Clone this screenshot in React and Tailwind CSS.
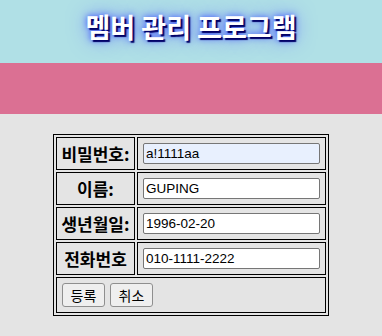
const rows = [
  { label: "비밀번호:", value: "a!1111aa", filled: true },
  { label: "이름:", value: "GUPING" },
  { label: "생년월일:", value: "1996-02-20" },
  { label: "전화번호", value: "010-1111-2222" },
];

export default function App() {
  return (
    <div className="min-h-[336px] bg-[#e4e4e4] font-['Liberation_Sans','Noto_Sans_CJK_KR',sans-serif]">
      {/* title */}
      <header className="h-[63px] bg-[#b0e0e6] flex justify-center pt-[9px]">
        <h1 className="text-[27px] leading-[36px] font-bold text-white font-['Noto_Sans_CJK_KR',sans-serif] [text-shadow:2px_2px_1px_#000066,0_0_6px_#3344ff,0_0_20px_#6677ff]">
          멤버 관리 프로그램
        </h1>
      </header>

      <div className="h-[51px] bg-[#db7093]" />

      <div className="pt-[20px] pb-[20px]">
        <table className="mx-auto border border-black border-separate border-spacing-[2px]">
          <tbody>
            {rows.map((row) => (
              <tr key={row.label}>
                <th className="w-[79px] h-[33px] p-0 border border-black text-center text-[17px] leading-[20px] font-bold text-black font-['Noto_Sans_CJK_KR',sans-serif] whitespace-nowrap">
                  {row.label}
                </th>
                <td className="w-[189px] h-[33px] p-[5px] border border-black">
                  <input
                    type="text"
                    defaultValue={row.value}
                    className={`block w-[177px] h-[21px] px-[2px] border border-[#767676] rounded-[2px] text-[13.5px] text-black outline-none ${
                      row.filled ? "bg-[#e8f0fe]" : "bg-white"
                    }`}
                  />
                </td>
              </tr>
            ))}
            <tr>
              <td colSpan={2} className="p-[5px] border border-black">
                <div className="flex gap-[5px]">
                  <button className="w-[43px] h-[24px] border border-[#8f8f8f] rounded-[3px] bg-[#efefef] text-[14px] text-black font-['Noto_Sans_CJK_KR',sans-serif] leading-none">
                    등록
                  </button>
                  <button className="w-[43px] h-[24px] border border-[#8f8f8f] rounded-[3px] bg-[#efefef] text-[14px] text-black font-['Noto_Sans_CJK_KR',sans-serif] leading-none">
                    취소
                  </button>
                </div>
              </td>
            </tr>
          </tbody>
        </table>
      </div>
    </div>
  );
}
